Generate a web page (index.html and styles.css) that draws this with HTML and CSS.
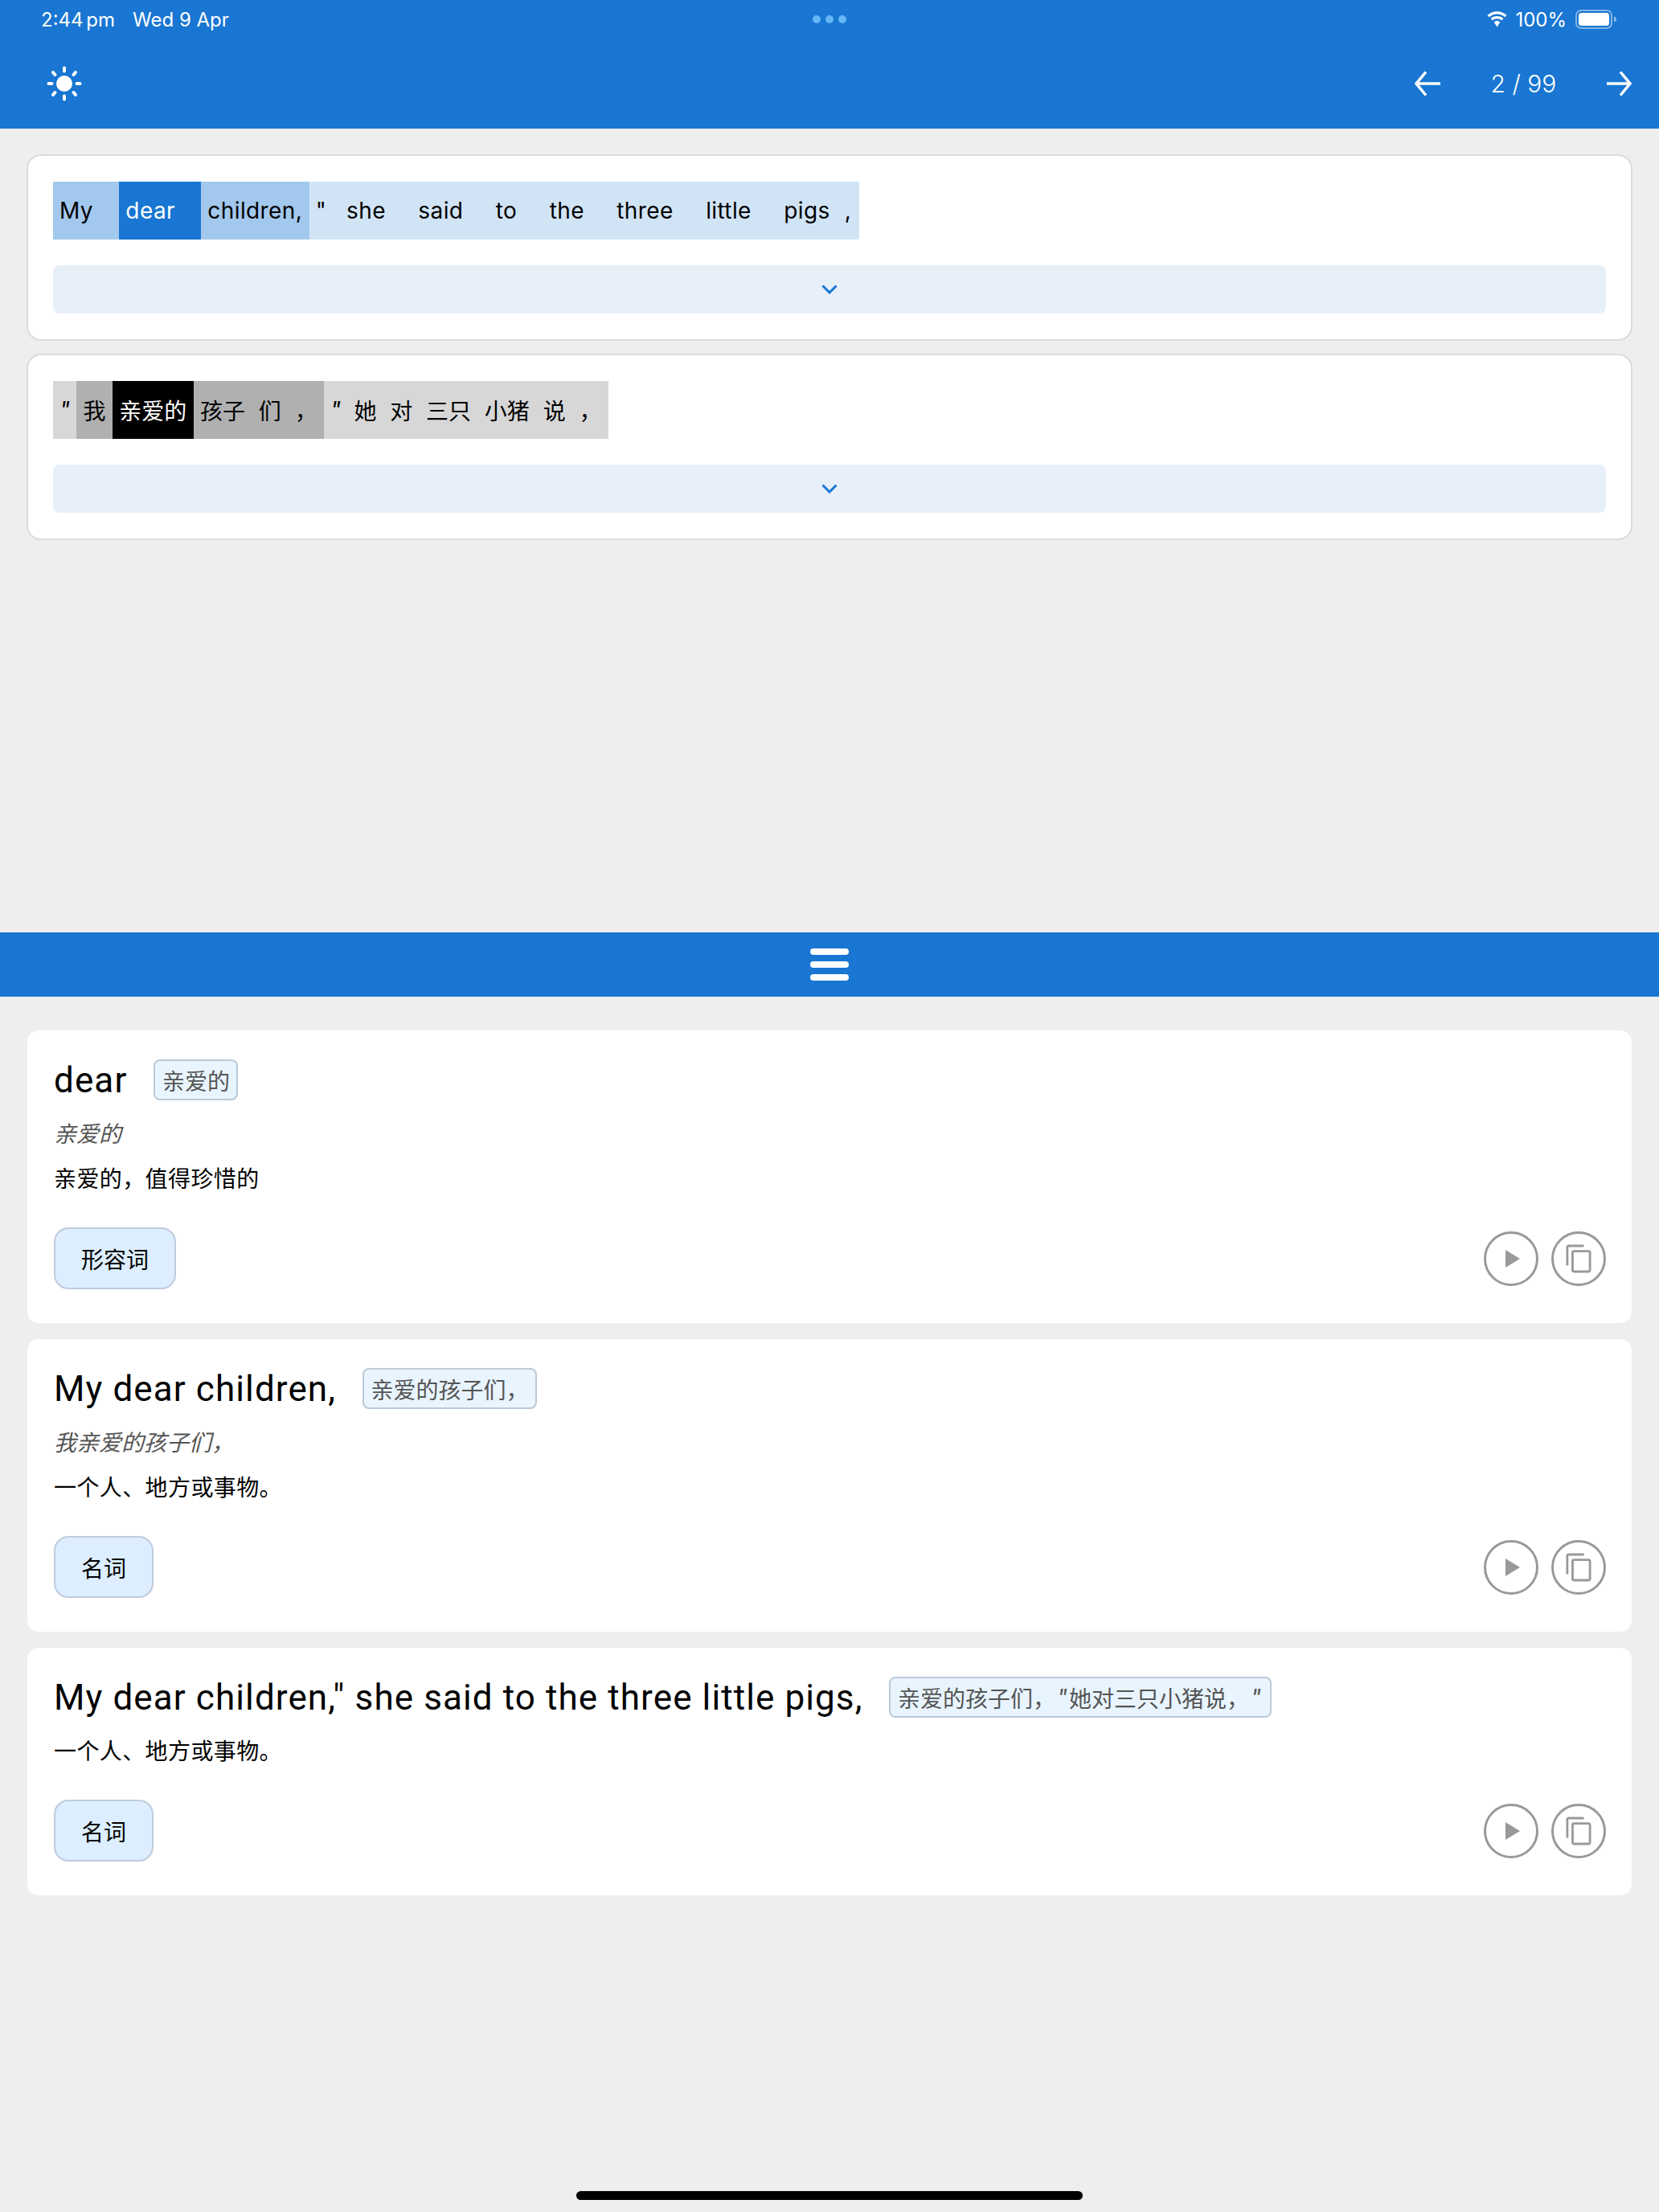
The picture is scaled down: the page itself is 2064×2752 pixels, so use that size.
FILE: index.html
```html
<!DOCTYPE html>
<html lang="zh-CN">
<head>
<meta charset="utf-8">
<title>Reader</title>
<link rel="stylesheet" href="styles.css">
</head>
<body>
<header class="appbar">
  <div class="status">
    <div class="status-left"><span class="time">2:44 pm</span><span>Wed 9 Apr</span></div>
    <div class="status-dots"><i></i><i></i><i></i></div>
    <div class="status-right">
      <svg class="wifi" viewBox="0 0 27 20" width="27" height="20"><path d="M13.5 3.4c3.8 0 7.2 1.5 9.8 3.9l2.2-2.3C22.3 2 18.1.3 13.5.3S4.700 2 1.500 5l2.200 2.300c2.600-2.400 6-3.900 9.800-3.900z" fill="#fff"/><path d="M13.500 9.200c2.200 0 4.200.9 5.700 2.200l2.200-2.300c-2.100-1.900-4.900-3.100-7.900-3.100s-5.800 1.200-7.900 3.100l2.200 2.300c1.500-1.300 3.500-2.200 5.700-2.200z" fill="#fff"/><path d="M13.500 12c-1.500 0-2.800.6-3.800 1.500l3.800 6 3.800-6c-1-.9-2.300-1.500-3.800-1.500z" fill="#fff"/></svg>
      <span class="pct">100%</span>
      <svg class="battery" viewBox="0 0 52 24" width="52" height="24"><rect x="1" y="1" width="44" height="22" rx="6" fill="none" stroke="#fff" stroke-opacity=".45" stroke-width="2"/><rect x="4" y="4" width="38" height="16" rx="3.500" fill="#fff"/><path d="M48 8.500c2 .5 3 2 3 3.500s-1 3-3 3.500z" fill="#fff" fill-opacity=".5"/></svg>
    </div>
  </div>
  <div class="toolbar">
    <svg class="sun" viewBox="0 0 44 44" width="44" height="44"><ellipse cx="22" cy="22" rx="10" ry="10" fill="#fff"/><g stroke="#fff" stroke-width="4" stroke-linecap="round"><path d="M22 2.500v4"/><path d="M22 37.500v4"/><path d="M2.500 22h4"/><path d="M37.500 22h4"/><path d="M8 8l2.500 3"/><path d="M36 8l-2.500 3"/><path d="M8 36l2.500-3"/><path d="M36 36l-2.500-3"/></g></svg>
    <nav class="pager">
      <svg class="arrow" viewBox="0 0 33 32" width="33" height="32"><path d="M33 16H3M15 1.500L3 16l12 14.500" fill="none" stroke="#fff" stroke-width="3.500"/></svg>
      <span class="page">2 / 99</span>
      <svg class="arrow" viewBox="0 0 32 32" width="32" height="32"><path d="M0 16h29M17 1.500L29 16 17 30.500" fill="none" stroke="#fff" stroke-width="3.500"/></svg>
    </nav>
  </div>
</header>

<main class="reader">
  <section class="sentence">
    <div class="chips latin">
      <span class="chip blue2 word">My</span><span class="chip blue1 word">dear</span><span class="chip blue2">children,</span><span class="chip blue3 quote">"</span><span class="chip blue3 word">she</span><span class="chip blue3 word">said</span><span class="chip blue3 word">to</span><span class="chip blue3 word">the</span><span class="chip blue3 word">three</span><span class="chip blue3 word">little</span><span class="chip blue3 last">pigs</span><span class="chip blue3 comma">,</span>
    </div>
    <button class="expand"><svg viewBox="0 0 20 12" width="20" height="12"><path d="M1.500 1.500L10 10l8.500-8.500" fill="none" stroke="#1976d2" stroke-width="3"/></svg></button>
  </section>
  <section class="sentence">
    <div class="chips">
      <span class="chip gray3 qm">"</span><span class="chip gray2">我</span><span class="chip gray1">亲爱的</span><span class="chip gray2">孩子</span><span class="chip gray2">们</span><span class="chip gray2">，</span><span class="chip gray3 qm">"</span><span class="chip gray3">她</span><span class="chip gray3">对</span><span class="chip gray3">三只</span><span class="chip gray3">小猪</span><span class="chip gray3">说</span><span class="chip gray3">，</span>
    </div>
    <button class="expand"><svg viewBox="0 0 20 12" width="20" height="12"><path d="M1.500 1.500L10 10l8.500-8.500" fill="none" stroke="#1976d2" stroke-width="3"/></svg></button>
  </section>
</main>

<div class="divider"><span class="burger"><i></i><i></i><i></i></span></div>

<section class="details">
  <article class="card">
    <div class="head"><h2>dear</h2><span class="tag">亲爱的</span></div>
    <p class="orig">亲爱的</p>
    <p class="def">亲爱的，值得珍惜的</p>
    <div class="foot">
      <span class="pos">形容词</span>
      <div class="actions">
        <span class="round"><svg class="play" viewBox="0 0 18 22" width="18" height="22"><path d="M0 0l18 11L0 22z" fill="#999"/></svg></span>
        <span class="round"><svg viewBox="0 0 34 38" width="32" height="36"><path d="M2 28V3.500C2 2.700 2.700 2 3.500 2H24" fill="none" stroke="#999" stroke-width="3"/><rect x="9" y="9" width="23" height="27" rx="2" fill="none" stroke="#999" stroke-width="3"/></svg></span>
      </div>
    </div>
  </article>
  <article class="card">
    <div class="head"><h2>My dear children,</h2><span class="tag">亲爱的孩子们，</span></div>
    <p class="orig">我亲爱的孩子们，</p>
    <p class="def">一个人、地方或事物。</p>
    <div class="foot">
      <span class="pos">名词</span>
      <div class="actions">
        <span class="round"><svg class="play" viewBox="0 0 18 22" width="18" height="22"><path d="M0 0l18 11L0 22z" fill="#999"/></svg></span>
        <span class="round"><svg viewBox="0 0 34 38" width="32" height="36"><path d="M2 28V3.500C2 2.700 2.700 2 3.500 2H24" fill="none" stroke="#999" stroke-width="3"/><rect x="9" y="9" width="23" height="27" rx="2" fill="none" stroke="#999" stroke-width="3"/></svg></span>
      </div>
    </div>
  </article>
  <article class="card">
    <div class="head"><h2>My dear children," she said to the three little pigs,</h2><span class="tag">亲爱的孩子们，<i class="tq">"</i>她对三只小猪说，<i class="tq">"</i></span></div>
    <p class="def">一个人、地方或事物。</p>
    <div class="foot">
      <span class="pos">名词</span>
      <div class="actions">
        <span class="round"><svg class="play" viewBox="0 0 18 22" width="18" height="22"><path d="M0 0l18 11L0 22z" fill="#999"/></svg></span>
        <span class="round"><svg viewBox="0 0 34 38" width="32" height="36"><path d="M2 28V3.500C2 2.700 2.700 2 3.500 2H24" fill="none" stroke="#999" stroke-width="3"/><rect x="9" y="9" width="23" height="27" rx="2" fill="none" stroke="#999" stroke-width="3"/></svg></span>
      </div>
    </div>
  </article>
</section>

<div class="home-indicator"></div>
</body>
</html>
```
FILE: styles.css
```css
* { box-sizing: border-box; }
html, body { margin: 0; padding: 0; }
body {
  width: 2064px;
  height: 2752px;
  background: #eeeeee;
  font-family: Inter, "Noto Sans CJK SC", sans-serif;
  color: #000;
  position: relative;
  overflow: hidden;
}
.appbar { height: 160px; background: #1976d2; color: #fff; display: flex; flex-direction: column; }
.status { height: 48px; position: relative; display: flex; justify-content: space-between; align-items: center; padding: 0 52px 0 51px; font-size: 24px; }
.status-left { display: flex; gap: 22px; }
.time { word-spacing: -3px; }
.status-dots { position: absolute; left: 1011px; top: 19px; display: flex; gap: 6px; }
.status-dots i { width: 10px; height: 10px; border-radius: 50%; background: #66b5f6; display: block; }
.status-right { display: flex; align-items: center; gap: 9px; }
.pct { margin-right: 2px; }
.toolbar { flex: 1; display: flex; justify-content: space-between; align-items: center; padding: 0 33px 0 58px; }
.pager { display: flex; align-items: center; }
.page { font-size: 30px; font-weight: 300; width: 207px; text-align: center; }

.reader { height: 1000px; padding: 32px 33px 0; display: flex; flex-direction: column; gap: 16px; }
.sentence { height: 232px; background: #fff; border: 2px solid #dcdcdc; border-radius: 18px; padding: 32px 31px 0; display: flex; flex-direction: column; gap: 32px; }
.chips { display: flex; height: 72px; align-self: flex-start; font-size: 28px; }
.chip { display: flex; align-items: center; padding: 0 8.4px; white-space: pre; }
.chips.latin { letter-spacing: .4px; }
.chips.latin .chip { padding-left: 8px; }
.chips.latin .chip.word { padding-right: 32.4px; }
.chips.latin .chip.quote { padding-right: 17px; }
.chips.latin .chip.last { padding-right: 10px; }
.chips.latin .chip.comma { padding-right: 10px; }
.chip.qm { font-style: italic; padding: 0 8px; }
.blue1 { background: #1976d2; color: #fff; }
.blue2 { background: #a3c8ed; }
.blue3 { background: #d1e4f6; }
.gray1 { background: #000; color: #fff; }
.gray2 { background: #b0b0b0; }
.gray3 { background: #d7d7d7; }
.expand { height: 60px; width: 100%; border: 0; background: #e7eff9; border-radius: 8px; display: flex; align-items: center; justify-content: center; padding: 0; }

.divider { height: 80px; background: #1976d2; display: flex; align-items: center; justify-content: center; }
.burger { display: flex; flex-direction: column; gap: 8px; }
.burger i { display: block; width: 48px; height: 8px; border-radius: 4px; background: #fff; }

.details { padding: 42px 34px 0; display: flex; flex-direction: column; gap: 20px; }
.card { background: #fff; border-radius: 14px; padding: 36px 32px 42px 33px; display: flex; flex-direction: column; }
.head { display: flex; align-items: center; gap: 33px; height: 51px; }
h2 { margin: 0; font-family: Roboto, sans-serif; font-size: 44px; font-weight: 400; letter-spacing: 1.1px; white-space: nowrap; }
.tag { height: 51px; display: flex; align-items: center; padding: 0 8.5px; border: 2px solid #bcc9d8; border-radius: 8px; background: #e8f4fe; color: #555; font-size: 28px; white-space: pre; }
.tq { padding: 0 2px; }
.orig { margin: 22px 0 0; font-size: 28px; line-height: 40px; font-style: italic; color: #555; }
.def { margin: 22px 0 0; font-size: 28px; line-height: 40px; letter-spacing: .4px; }
.orig + .def { margin-top: 16px; }
.foot { margin-top: 40px; display: flex; justify-content: space-between; align-items: center; }
.pos { height: 77px; display: flex; align-items: center; padding: 0 32px; border: 2px solid #c0ccdc; border-radius: 18px; background: #dceeff; font-size: 28px; }
.actions { display: flex; gap: 16px; }
.round { width: 68px; height: 68px; border: 3px solid #999; border-radius: 50%; display: flex; align-items: center; justify-content: center; }
.play { margin-left: 3px; }

.home-indicator { position: absolute; left: 717px; top: 2726px; width: 630px; height: 11px; border-radius: 5.5px; background: #000; }
```
